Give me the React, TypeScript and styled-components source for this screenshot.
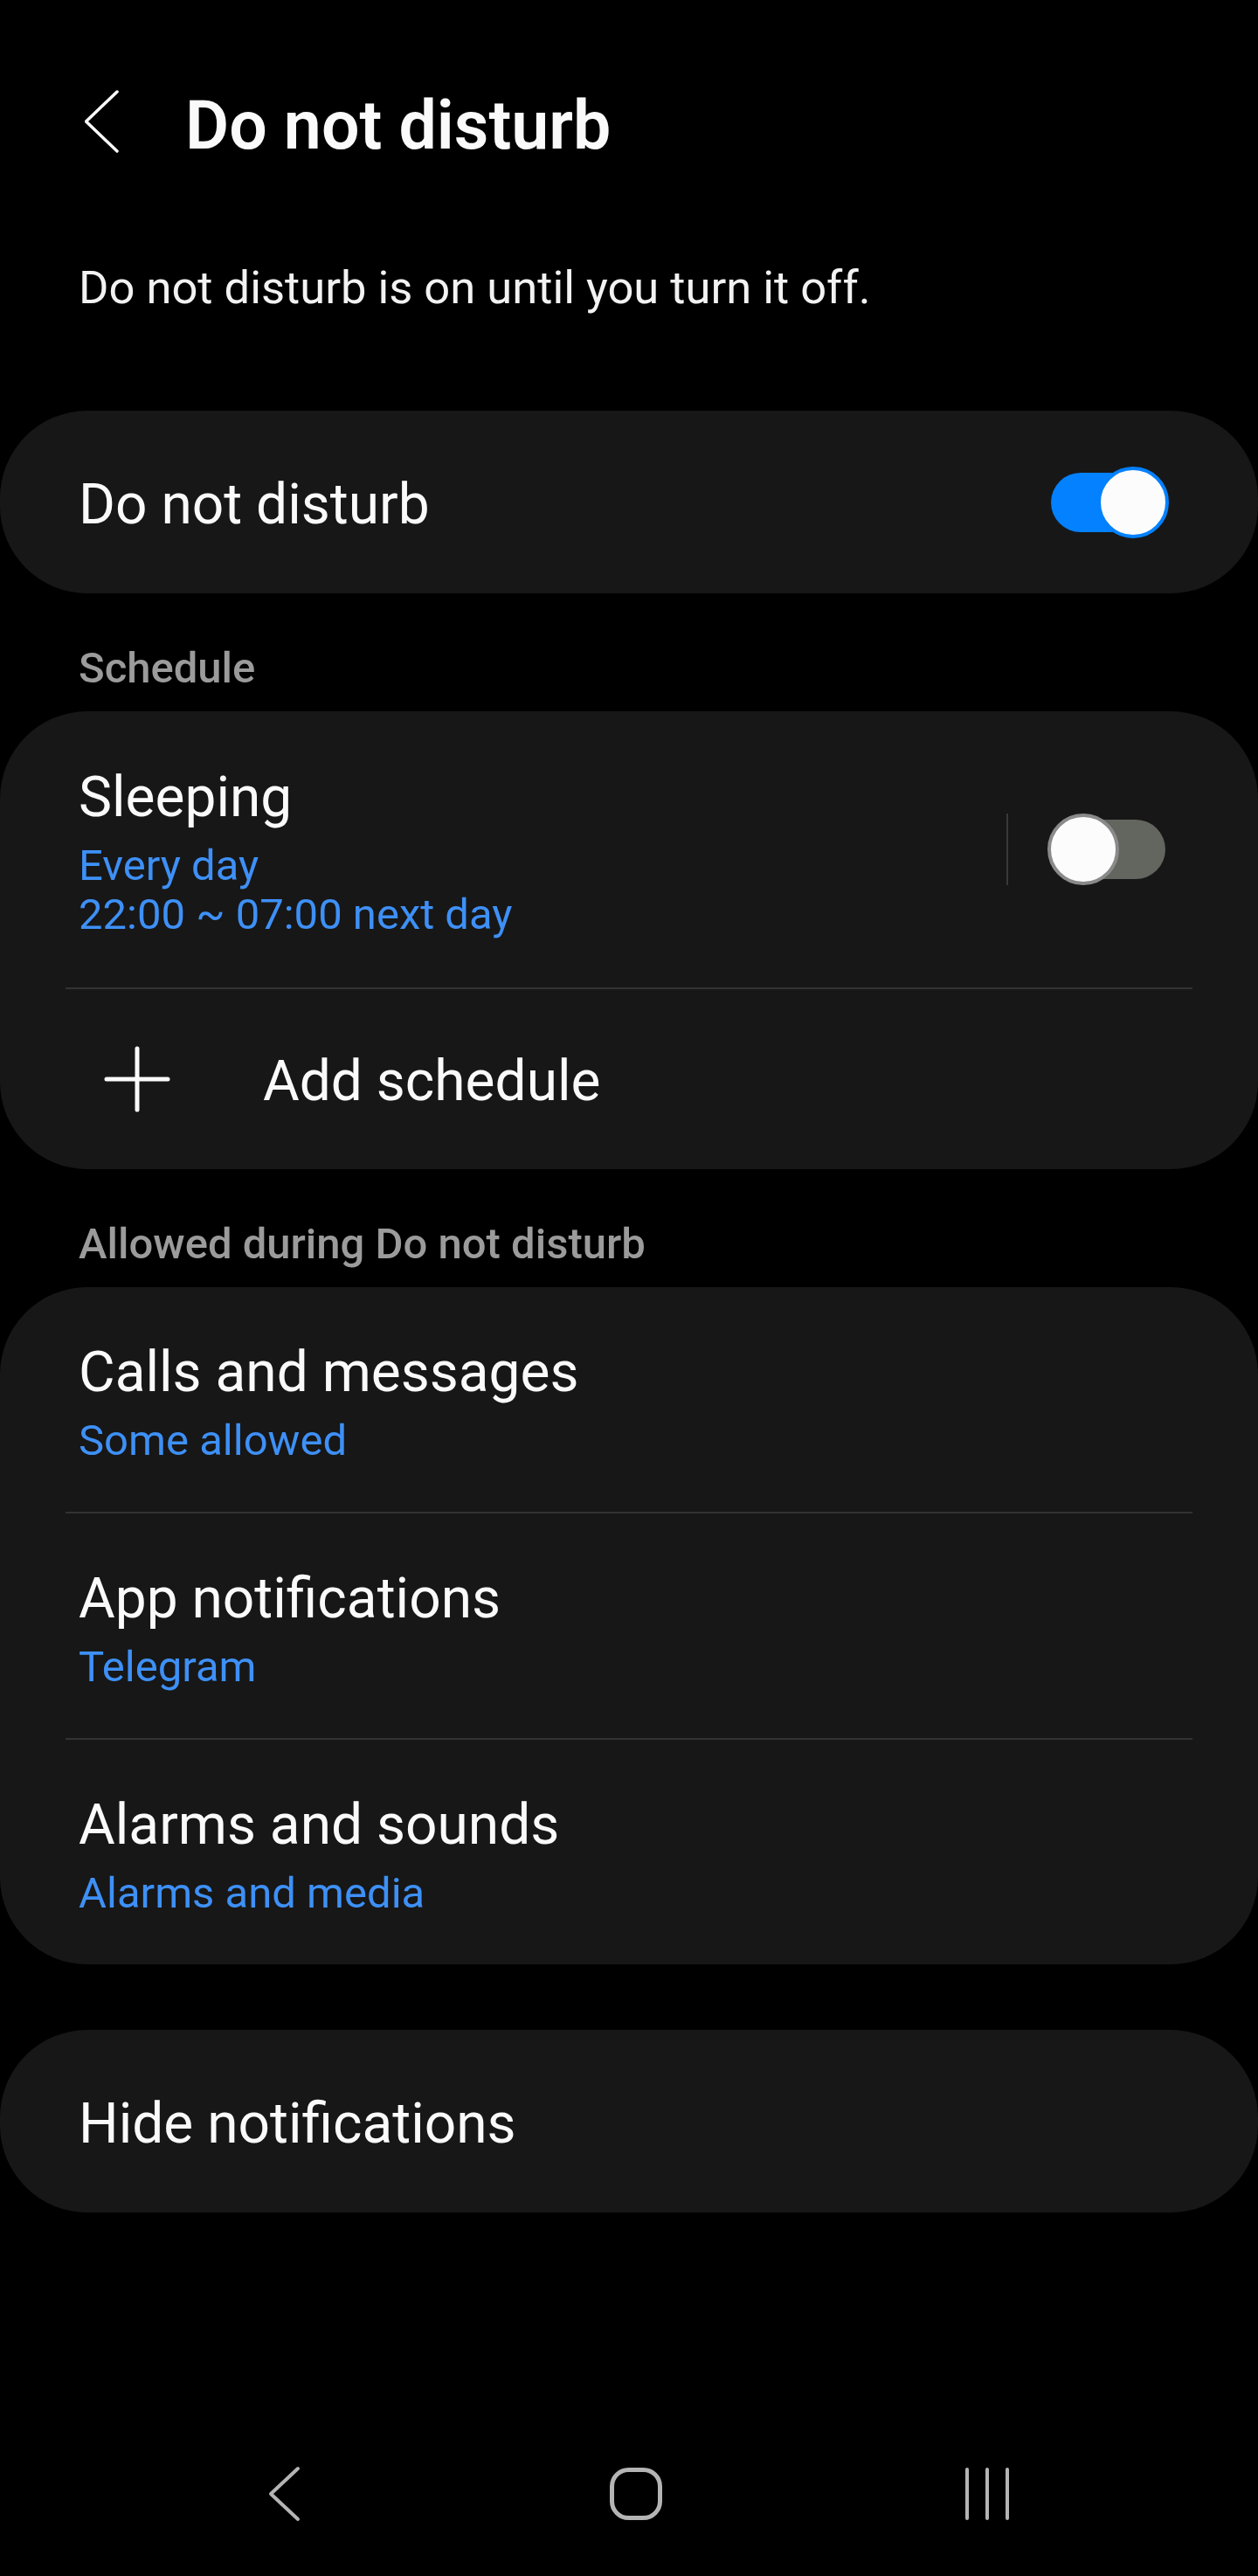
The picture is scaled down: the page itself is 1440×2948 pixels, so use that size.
import React from "react";
import styled, { createGlobalStyle } from "styled-components";

const GlobalStyle = createGlobalStyle`
  html, body {
    margin: 0;
    padding: 0;
    background: #000;
  }
  body {
    font-family: Roboto, "Noto Sans", "Liberation Sans", sans-serif;
    color: #fafafa;
  }
`;

const Page = styled.div`
  width: 1440px;
  min-height: 2948px;
  display: flex;
  flex-direction: column;
  background: #000;
`;

const TopBar = styled.header`
  display: flex;
  align-items: center;
  height: 90px;
  padding: 99px 0 0 97px;
`;

const BackButton = styled.button`
  width: 40px;
  height: 90px;
  padding: 0;
  border: none;
  background: transparent;
  display: flex;

  svg {
    display: block;
  }
`;

const Title = styled.h1`
  margin: 0 0 0 75px;
  font-size: 77px;
  line-height: 90px;
  font-weight: 600;
`;

const Intro = styled.p`
  margin: 0;
  padding: 109px 90px 0;
  font-size: 52.5px;
  line-height: 62px;
  color: #f2f2f2;
`;

const Card = styled.section<{ $gap?: number }>`
  margin-top: ${(p) => p.$gap ?? 0}px;
  background: #171717;
  border-radius: 100px;
  display: flex;
  flex-direction: column;
`;

const SectionLabel = styled.h2`
  margin: 0;
  padding: 58px 90px 21px;
  font-size: 49px;
  line-height: 56px;
  font-weight: 500;
  color: #9b9b9b;
`;

const Row = styled.div<{ $height: number }>`
  display: flex;
  align-items: center;
  min-height: ${(p) => p.$height}px;
  padding: 0 102px 0 90px;
`;

const AddRow = styled(Row)`
  padding-left: 119px;
  gap: 106px;
`;

const TextBlock = styled.div`
  flex: 1;
  display: flex;
  flex-direction: column;
  padding-top: 6px;
`;

const Primary = styled.div`
  font-size: 64px;
  line-height: 76px;
  color: #fafafa;
`;

const Secondary = styled.div`
  font-size: 49px;
  line-height: 56px;
  color: #3e90f6;

  ${Primary} + & {
    margin-top: 12px;
  }
`;

const Divider = styled.hr`
  margin: 0 75px;
  border: none;
  height: 2px;
  background: #333;
`;

const VRule = styled.span`
  width: 2px;
  height: 82px;
  background: #393939;
  margin-right: 45px;
`;

const ToggleWrap = styled.span`
  position: relative;
  width: 139px;
  height: 82px;
  flex-shrink: 0;
`;

const Track = styled.span<{ $on: boolean }>`
  position: absolute;
  top: 7px;
  left: ${(p) => (p.$on ? 4 : 1)}px;
  width: 134px;
  height: 68px;
  border-radius: 34px;
  background: ${(p) => (p.$on ? "#0381fe" : "#63655f")};
`;

const Knob = styled.span<{ $on: boolean }>`
  position: absolute;
  top: 0;
  left: ${(p) => (p.$on ? 57 : 0)}px;
  width: 74px;
  height: 74px;
  border-radius: 50%;
  background: #fcfcfc;
  border: 4px solid ${(p) => (p.$on ? "#0381fe" : "#8a8a8a")};
`;

const Toggle = ({ on }: { on: boolean }) => (
  <ToggleWrap>
    <Track $on={on} />
    <Knob $on={on} />
  </ToggleWrap>
);

const NavBar = styled.nav`
  margin-top: auto;
  height: 188px;
  display: grid;
  grid-template-columns: repeat(3, 402px);
  justify-content: center;
  align-items: center;
  padding-left: 16px;
`;

const NavSlot = styled.span`
  display: flex;
  justify-content: center;
  align-items: center;
`;

const allowed = [
  { title: "Calls and messages", sub: "Some allowed" },
  { title: "App notifications", sub: "Telegram" },
  { title: "Alarms and sounds", sub: "Alarms and media" },
];

const App = () => {
  return (
    <>
      <GlobalStyle />
      <Page>
        <TopBar>
          <BackButton aria-label="Back">
            <svg width="40" height="90" viewBox="0 0 40 90">
              <path
                d="M37 6 L1.5 40 L37 74"
                fill="none"
                stroke="#fafafa"
                strokeWidth="3.5"
                strokeLinecap="round"
                strokeLinejoin="round"
              />
            </svg>
          </BackButton>
          <Title>Do not disturb</Title>
        </TopBar>

        <Intro>Do not disturb is on until you turn it off.</Intro>

        <Card $gap={110}>
          <Row $height={209}>
            <TextBlock>
              <Primary>Do not disturb</Primary>
            </TextBlock>
            <Toggle on />
          </Row>
        </Card>

        <SectionLabel>Schedule</SectionLabel>
        <Card>
          <Row $height={316}>
            <TextBlock>
              <Primary>Sleeping</Primary>
              <Secondary>Every day</Secondary>
              <Secondary>22:00 ~ 07:00 next day</Secondary>
            </TextBlock>
            <VRule />
            <Toggle on={false} />
          </Row>
          <Divider />
          <AddRow $height={206}>
            <svg width="76" height="76" viewBox="0 0 76 76">
              <path
                d="M38 3 V73 M3 38 H73"
                stroke="#fafafa"
                strokeWidth="5"
                strokeLinecap="round"
              />
            </svg>
            <TextBlock>
              <Primary>Add schedule</Primary>
            </TextBlock>
          </AddRow>
        </Card>

        <SectionLabel>Allowed during Do not disturb</SectionLabel>
        <Card>
          {allowed.map((item, i) => (
            <React.Fragment key={item.title}>
              {i > 0 && <Divider />}
              <Row $height={257}>
                <TextBlock>
                  <Primary>{item.title}</Primary>
                  <Secondary>{item.sub}</Secondary>
                </TextBlock>
              </Row>
            </React.Fragment>
          ))}
        </Card>

        <Card $gap={75}>
          <Row $height={209}>
            <TextBlock>
              <Primary>Hide notifications</Primary>
            </TextBlock>
          </Row>
        </Card>

        <NavBar>
          <NavSlot>
            <svg width="40" height="64" viewBox="0 0 40 64">
              <path
                d="M35 3 L4 32 L35 61"
                fill="none"
                stroke="#b4b4b4"
                strokeWidth="4"
                strokeLinecap="round"
                strokeLinejoin="round"
              />
            </svg>
          </NavSlot>
          <NavSlot>
            <svg width="64" height="64" viewBox="0 0 64 64">
              <rect
                x="4.5"
                y="4.5"
                width="55"
                height="55"
                rx="19"
                fill="none"
                stroke="#b4b4b4"
                strokeWidth="5"
              />
            </svg>
          </NavSlot>
          <NavSlot>
            <svg width="56" height="64" viewBox="0 0 56 64">
              <path
                d="M5 4 V60 M28 4 V60 M51 4 V60"
                stroke="#b4b4b4"
                strokeWidth="4"
                strokeLinecap="round"
              />
            </svg>
          </NavSlot>
        </NavBar>
      </Page>
    </>
  );
};

export default App;
